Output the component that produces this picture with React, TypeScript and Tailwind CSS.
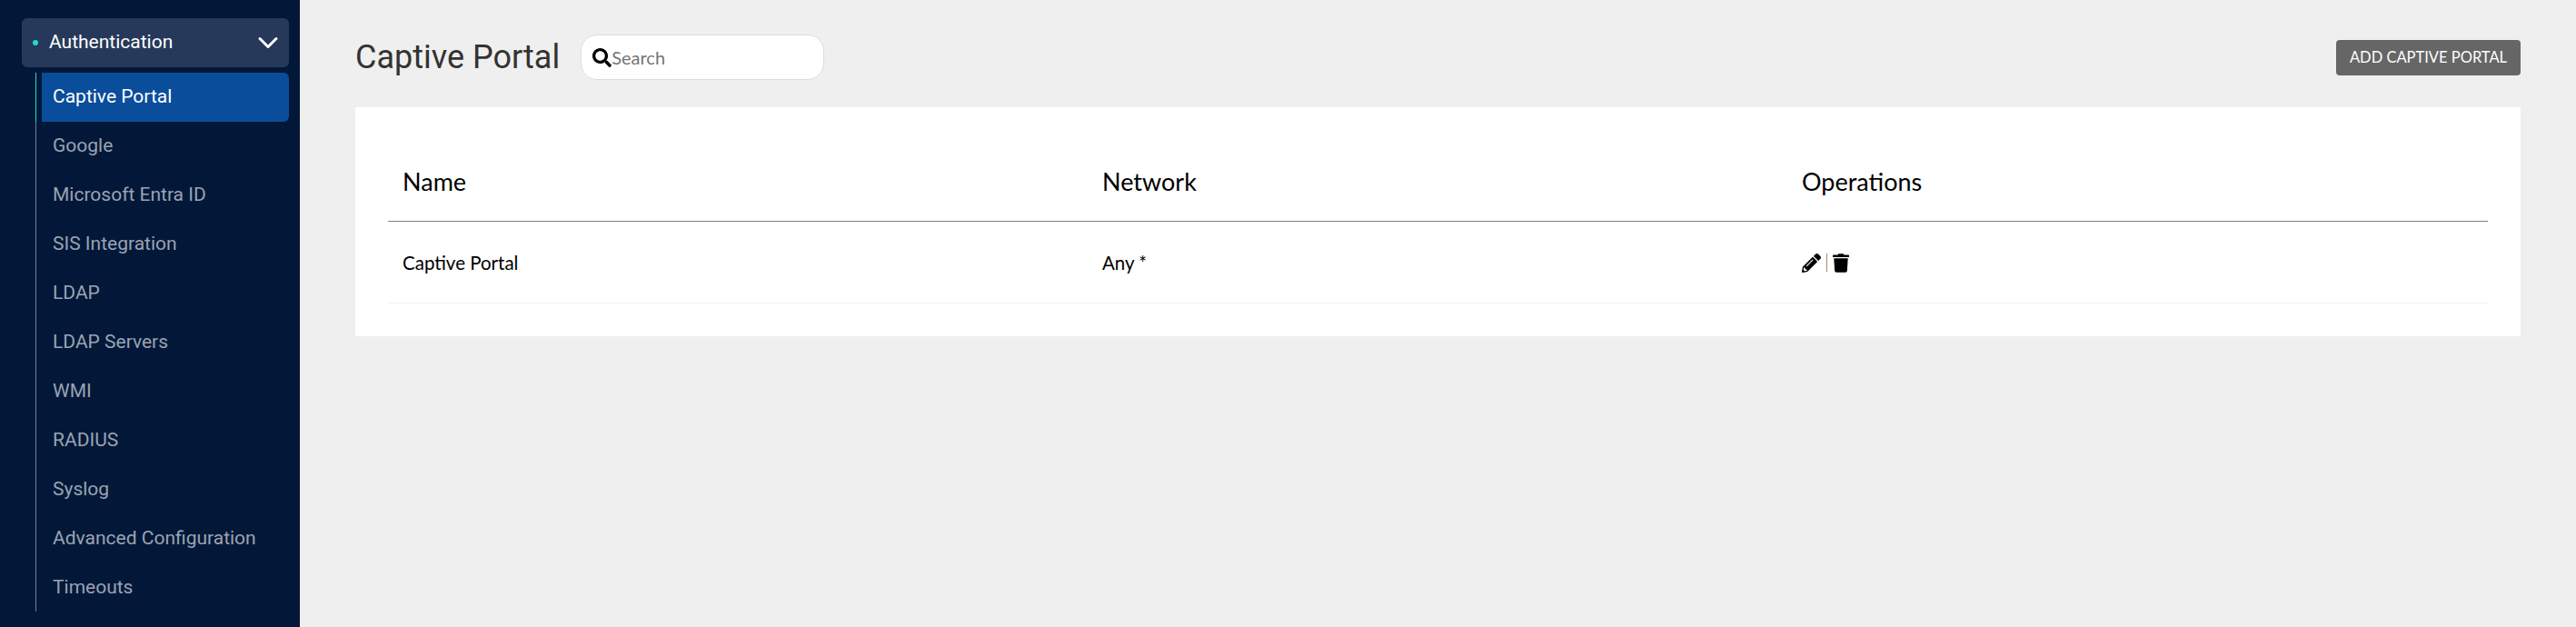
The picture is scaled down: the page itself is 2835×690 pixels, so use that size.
import React from 'react';
import { ChevronDown } from 'lucide-react';
import { FaPencilAlt, FaTrash, FaSearch } from 'react-icons/fa';

const menuItems = [
  'Google',
  'Microsoft Entra ID',
  'SIS Integration',
  'LDAP',
  'LDAP Servers',
  'WMI',
  'RADIUS',
  'Syslog',
  'Advanced Configuration',
  'Timeouts',
];

function Sidebar() {
  return (
    <aside className="w-[330px] shrink-0 bg-[#031839] pt-5 pl-6 pr-3 font-['Roboto',sans-serif]">
      <div className="flex h-[54px] items-center rounded-md bg-[#27395a] pl-3 pr-[5px] text-white">
        <span className="h-[6px] w-[6px] rounded-full bg-[#1ddfd0]" />
        <span className="ml-[12px] text-[21px]">Authentication</span>
        <ChevronDown className="ml-auto h-9 w-9" strokeWidth={2} />
      </div>
      <div className="ml-[15px] mt-[6px] h-[593px] border-l border-[#6f7c91]">
        <div className="relative ml-[6px] flex h-[54px] items-center rounded-r-md bg-[#0a4d9b] pl-3 text-[21px] text-white">
          <span className="absolute -left-[7px] top-0 h-[54px] w-px bg-[#1ddfd0]" />
          Captive Portal
        </div>
        {menuItems.map((item) => (
          <div key={item} className="ml-[6px] flex h-[54px] items-center pl-3 text-[21px] text-[#9aa3b2]">
            {item}
          </div>
        ))}
      </div>
    </aside>
  );
}

export default function App() {
  return (
    <div className="flex h-[690px] w-[2835px] overflow-hidden bg-[#efefef]">
      <Sidebar />
      <main className="flex-1 pl-[61px] pr-[61px] font-['Lato',sans-serif]">
        <div className="flex h-[118px] items-center pt-[8px]">
          <h1 className="font-['Roboto',sans-serif] text-[36px] font-normal text-[#333333]">Captive Portal</h1>
          <div className="ml-[23px] flex h-[50px] w-[268px] items-center rounded-[18px] border border-[#dddddd] bg-white pl-[12px]">
            <FaSearch className="h-[21px] w-[21px] text-black" />
            <span className="text-[20px] text-[#757575]">Search</span>
          </div>
          <button className="ml-auto h-[39px] w-[203px] rounded bg-[#666666] text-[16.5px] text-white">ADD CAPTIVE PORTAL</button>
        </div>
        <div className="h-[252px] bg-white px-9 pt-[36px]">
          <div className="grid h-[90px] grid-cols-[770px_770px_1fr] items-start border-b border-[#808080] pt-[27px] pl-4 text-[27px] leading-[38px] text-black">
            <div>Name</div>
            <div>Network</div>
            <div>Operations</div>
          </div>
          <div className="grid h-[90px] grid-cols-[770px_770px_1fr] items-center border-b border-[#f2f2f2] pt-[1px] pl-4 text-[20.5px] text-black">
            <div>Captive Portal</div>
            <div>Any *</div>
            <div className="flex items-center gap-[6px]">
              <FaPencilAlt className="h-[21px] w-[21px]" />
              <span className="h-[20px] w-px bg-[#a08a78]" />
              <FaTrash className="h-[21px] w-[18px]" />
            </div>
          </div>
        </div>
      </main>
    </div>
  );
}
